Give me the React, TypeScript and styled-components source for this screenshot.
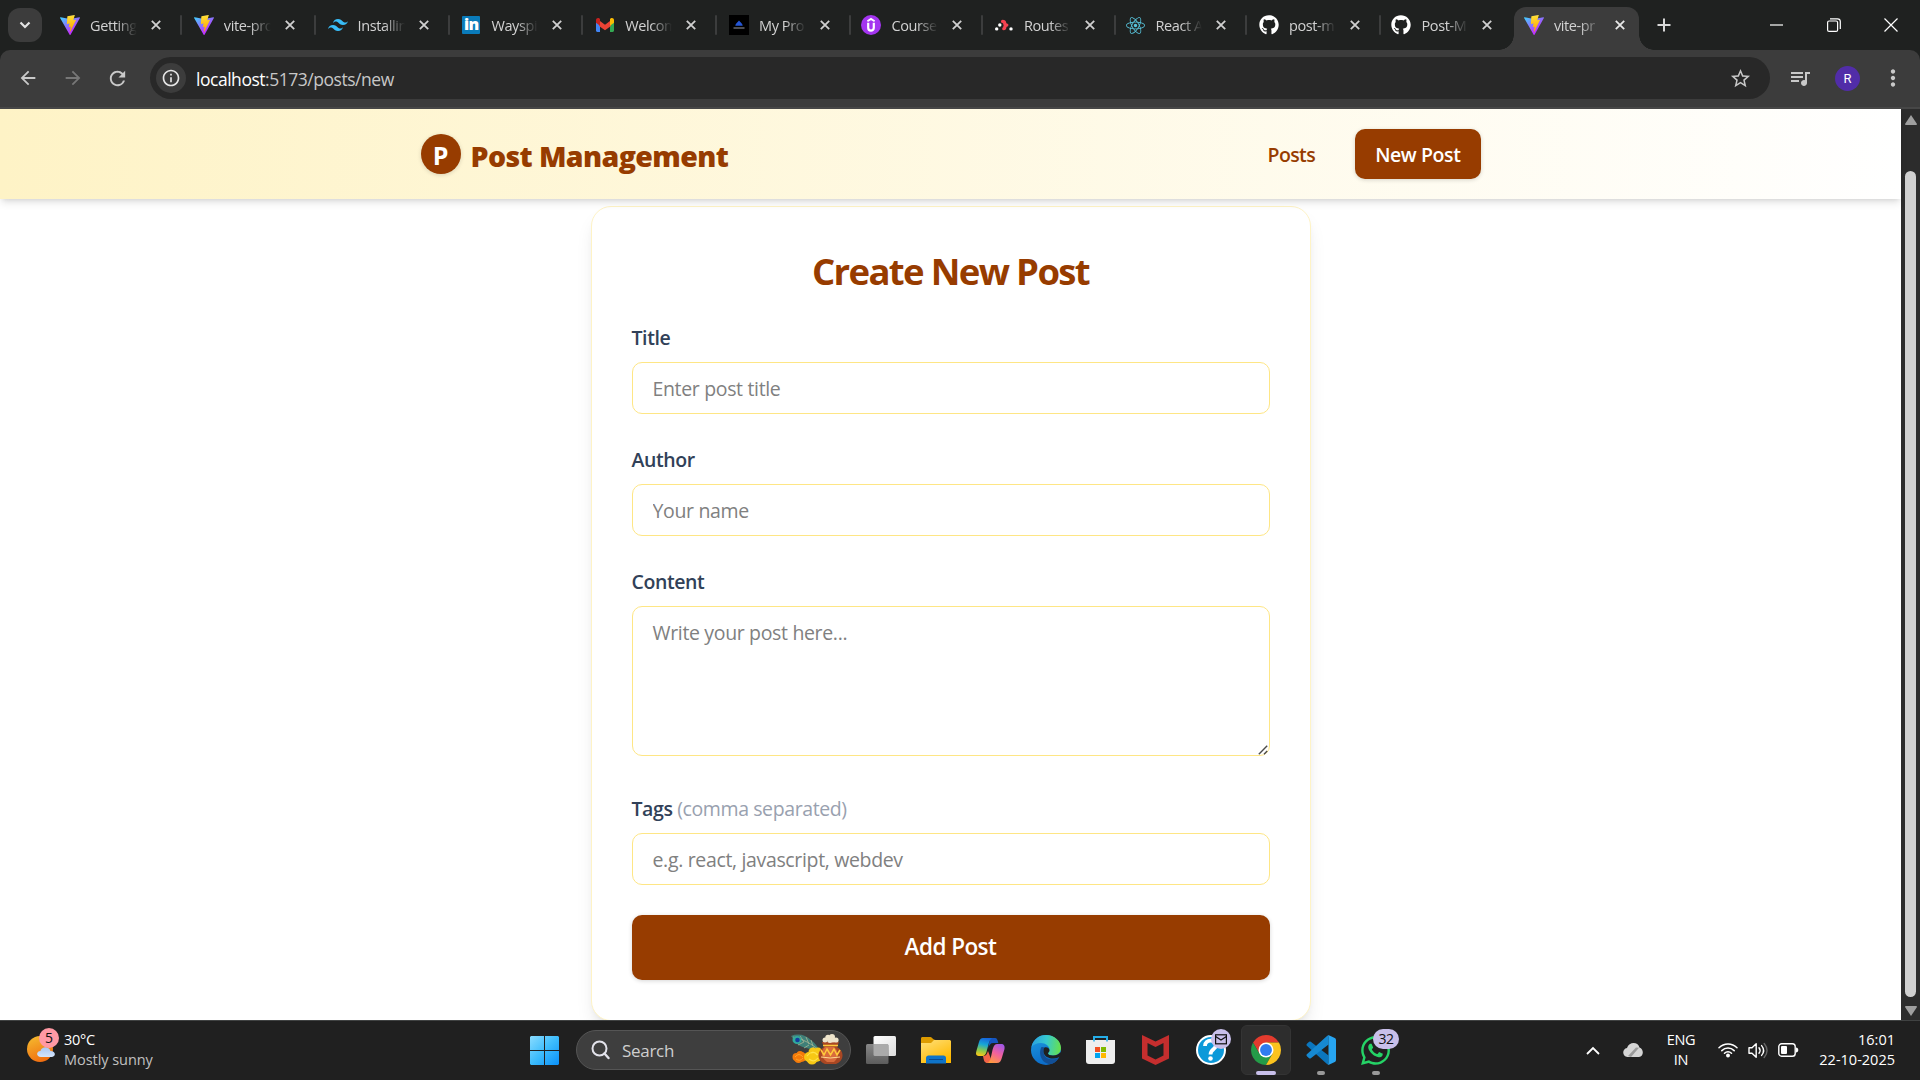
import React from 'react';
import styled, { createGlobalStyle } from 'styled-components';
import { MdArrowBack, MdArrowForward, MdRefresh, MdInfoOutline, MdStarBorder, MdQueueMusic, MdMoreVert } from 'react-icons/md';
import { FaGithub, FaReact, FaWhatsapp } from 'react-icons/fa';
import { SiTailwindcss } from 'react-icons/si';

const brown = '#973c00';

const GlobalStyle = createGlobalStyle`
  *, *::before, *::after { box-sizing: border-box; }
  body {
    margin: 0;
    overflow: hidden;
    background: #fff;
    font-family: "Open Sans", "Noto Sans", sans-serif;
  }
  svg { display: block; flex: none; }
  input, textarea, button { font-family: inherit; }
`;

const Screen = styled.div`
  width: 1920px;
  height: 1080px;
  display: flex;
  flex-direction: column;
  overflow: hidden;
`;

/* ---------- browser tabs ---------- */

const TabStrip = styled.div`
  height: 50px;
  flex: none;
  display: flex;
  background: #1f2120;
  color: #c7c7c7;
`;

const TabSearch = styled.div`
  width: 34px;
  height: 34px;
  margin: 8px 8px 0;
  border-radius: 12px;
  background: #3c3c3c;
  display: flex;
  align-items: center;
  justify-content: center;
`;

const Tab = styled.div<{ $active?: boolean; $w: number }>`
  position: relative;
  flex: none;
  width: ${p => p.$w}px;
  height: 43px;
  margin-top: 7px;
  padding: 0 0 7px 10px;
  display: flex;
  align-items: center;
  border-radius: 12px 12px 0 0;
  background: ${p => (p.$active ? '#3c3c3c' : 'transparent')};
  &::before, &::after {
    content: '';
    display: ${p => (p.$active ? 'block' : 'none')};
    position: absolute;
    bottom: 0;
    width: 15px;
    height: 15px;
  }
  &::before {
    left: -15px;
    background: radial-gradient(circle at 0 0, transparent 14.5px, #3c3c3c 15px);
  }
  &::after {
    right: -15px;
    background: radial-gradient(circle at 100% 0, transparent 14.5px, #3c3c3c 15px);
  }
`;

const TabTitle = styled.span`
  width: 47px;
  margin: 1px 14px 0 10px;
  white-space: nowrap;
  font-size: 14.5px;
  line-height: 22px;
  letter-spacing: -0.4px;
  color: #d2d2d2;
  mask-image: linear-gradient(to right, #000 55%, transparent 100%);
`;

const TabDivider = styled.i`
  width: 2px;
  height: 20px;
  margin-left: 19px;
  border-radius: 1px;
  background: #3c3d3d;
`;

const NewTab = styled.div`
  width: 50px;
  display: flex;
  align-items: center;
  justify-content: center;
`;

const WindowControls = styled.div`
  margin-left: auto;
  padding-right: 1px;
  display: flex;
  align-items: center;
  color: #fff;
`;

const WindowButton = styled.div`
  width: 57px;
  height: 50px;
  display: flex;
  align-items: center;
  justify-content: center;
`;

/* ---------- browser toolbar ---------- */

const ToolbarBack = styled.div`
  height: 59px;
  flex: none;
  background: #1f2120;
`;

const Toolbar = styled.div`
  height: 59px;
  display: flex;
  align-items: center;
  padding: 0 6px 1px 5px;
  background: #3c3c3c;
  border-bottom: 2px solid #474747;
  border-radius: 10px 10px 0 0;
  color: #c7c7c7;
`;

const NavButton = styled.div<{ $dim?: boolean; $w?: number }>`
  width: ${p => p.$w ?? 45}px;
  display: flex;
  justify-content: center;
  color: ${p => (p.$dim ? '#777' : '#c9c9c9')};
`;

const Omnibox = styled.div`
  width: 1620px;
  height: 42px;
  margin-left: 10px;
  padding: 0 18px 0 6px;
  border-radius: 21px;
  background: #282828;
  display: flex;
  align-items: center;
`;

const SiteInfo = styled.div`
  width: 30px;
  height: 30px;
  border-radius: 50%;
  background: #3c3c3c;
  color: #e6e6e6;
  display: flex;
  align-items: center;
  justify-content: center;
`;

const Url = styled.div`
  flex: 1;
  margin: 2px 0 0 10px;
  font-size: 17.5px;
  letter-spacing: -0.47px;
  color: #c7c7c7;
  b { font-weight: 400; color: #fff; }
`;

const Avatar = styled.div`
  width: 25px;
  height: 25px;
  margin: 0 11px 0 6px;
  border-radius: 50%;
  background: #512da8;
  color: #fff;
  font-family: Roboto, sans-serif;
  font-size: 13px;
  display: flex;
  align-items: center;
  justify-content: center;
`;

/* ---------- page ---------- */

const Viewport = styled.div`
  height: 911px;
  flex: none;
  display: flex;
  overflow: hidden;
`;

const Page = styled.div`
  width: 1901px;
  background: #fff;
`;

const Header = styled.header`
  position: relative;
  height: 90px;
  background: linear-gradient(to right, #fef3c6, #fff);
  box-shadow: 0 5px 7.5px -1px rgba(0, 0, 0, 0.1), 0 2.5px 5px -2.5px rgba(0, 0, 0, 0.12);
`;

const HeaderInner = styled.div`
  width: 1060px;
  height: 90px;
  margin: 0 auto;
  display: flex;
  align-items: center;
  justify-content: space-between;
`;

const Brand = styled.div`
  display: flex;
  align-items: center;
  gap: 10px;
  font-size: 28.5px;
  font-weight: 800;
  letter-spacing: -0.6px;
  color: ${brown};
`;

const BrandName = styled.span`
  padding-top: 3px;
`;

const BrandMark = styled.div`
  width: 40px;
  height: 40px;
  border-radius: 50%;
  background: ${brown};
  color: #fff;
  font-size: 25px;
  font-weight: 700;
  letter-spacing: 0;
  display: flex;
  align-items: center;
  justify-content: center;
  padding-top: 2px;
  box-shadow: 0 1px 4px rgba(0, 0, 0, 0.15);
`;

const Nav = styled.nav`
  display: flex;
  align-items: center;
  gap: 40px;
`;

const NavLink = styled.a<{ $primary?: boolean }>`
  height: 50px;
  padding: ${p => (p.$primary ? '1px 20px 0' : '1px 0 0')};
  display: flex;
  align-items: center;
  border-radius: 10px;
  font-size: 19.5px;
  font-weight: 600;
  letter-spacing: ${p => (p.$primary ? -0.4 : -0.6)}px;
  white-space: nowrap;
  color: ${p => (p.$primary ? '#fff' : brown)};
  background: ${p => (p.$primary ? brown : 'transparent')};
  box-shadow: ${p => (p.$primary ? '0 1px 4px rgba(0,0,0,.16)' : 'none')};
`;

const Card = styled.form`
  width: 720px;
  height: 815px;
  margin: 7px auto 0;
  padding: 40px;
  border: 1px solid #fef3c6;
  border-radius: 20px;
  background: #fff;
  box-shadow: 0 12px 19px -4px rgba(0, 0, 0, 0.1), 0 5px 8px -5px rgba(0, 0, 0, 0.1);
  display: flex;
  flex-direction: column;
`;

const Heading = styled.h2`
  height: 45px;
  margin: 0 0 30px;
  padding-top: 2px;
  text-align: center;
  font-size: 36.5px;
  line-height: 45px;
  font-weight: 700;
  letter-spacing: -1.65px;
  color: ${brown};
`;

const Field = styled.label<{ $gap?: number }>`
  position: relative;
  display: flex;
  flex-direction: column;
  margin-bottom: ${p => p.$gap ?? 30}px;
`;

const FieldName = styled.span`
  height: 30px;
  margin-bottom: 10px;
  line-height: 32px;
  font-size: 19.5px;
  font-weight: 600;
  letter-spacing: -0.4px;
  color: #314158;
`;

const Hint = styled.span`
  font-weight: 400;
  color: #99a1af;
`;

const Input = styled.input`
  height: 52px;
  padding: 0 20px;
  border: 1px solid #fee685;
  border-radius: 10px;
  outline: none;
  font-size: 19.5px;
  letter-spacing: -0.34px;
  &::placeholder { color: #808080; opacity: 1; }
`;

const TextArea = styled.textarea`
  height: 150px;
  padding: 11px 20px;
  border: 1px solid #fee685;
  border-radius: 10px;
  outline: none;
  resize: none;
  font-size: 19.5px;
  line-height: 30px;
  letter-spacing: -0.34px;
  &::placeholder { color: #808080; opacity: 1; }
`;

const ResizeGrip = styled.svg`
  position: absolute;
  right: 2px;
  bottom: 1px;
`;

const Submit = styled.button`
  height: 65px;
  padding: 0 0 2px;
  border: 0;
  border-radius: 10px;
  background: ${brown};
  color: #fff;
  font-size: 22.500px;
  font-weight: 600;
  letter-spacing: -0.55px;
  box-shadow: 0 1px 4px rgba(0, 0, 0, 0.16);
`;

const ScrollTrack = styled.div`
  width: 19px;
  padding: 6px 0 4px;
  background: #2c2c2c;
  display: flex;
  flex-direction: column;
  align-items: center;
`;

const ScrollThumb = styled.div`
  width: 11px;
  height: 827px;
  margin: 46px 0 9px;
  border-radius: 6px;
  background: #d0d0d0;
`;

/* ---------- taskbar ---------- */

const Taskbar = styled.div`
  height: 60px;
  flex: none;
  display: flex;
  background: #202020;
  border-top: 1px solid #404242;
  color: #fff;
  font-size: 14.5px;
  line-height: 20px;
`;

const Weather = styled.div`
  width: 517px;
  padding: 3px 0 0 25px;
  display: flex;
  gap: 5px;
`;

const WeatherText = styled.div`
  padding-top: 6px;
  letter-spacing: -0.3px;
  span { display: block; color: #c0c0c0; letter-spacing: -0.05px; }
`;

const AppCell = styled.div`
  position: relative;
  width: 55px;
  height: 58px;
  display: flex;
  align-items: center;
  justify-content: center;
`;

const ActiveCell = styled.div`
  width: 50px;
  height: 50px;
  border-radius: 6px;
  border: 1px solid #343434;
  background: #2d2d2d;
  display: flex;
  align-items: center;
  justify-content: center;
`;

const Running = styled.i<{ $current?: boolean }>`
  position: absolute;
  left: 50%;
  bottom: 4px;
  transform: translateX(-50%);
  width: ${p => (p.$current ? 20 : 8)}px;
  height: 4px;
  border-radius: 2px;
  background: ${p => (p.$current ? '#c8bfea' : '#999')};
`;

const Badge = styled.span<{ $wide?: boolean }>`
  position: absolute;
  top: 8px;
  left: ${p => (p.$wide ? 25 : 28)}px;
  width: ${p => (p.$wide ? 26 : 20)}px;
  height: 20px;
  border-radius: 10px;
  background: #c8bfea;
  color: #111;
  font-size: 14px;
  letter-spacing: -0.5px;
  display: flex;
  align-items: center;
  justify-content: center;
`;

const SearchBox = styled.div`
  width: 275px;
  height: 40px;
  margin: 9px 2px 0 4px;
  padding: 0 6px 0 14px;
  border: 1px solid #555;
  border-radius: 20px;
  background: #3e3e3e;
  color: #cfcfcf;
  font-size: 17px;
  letter-spacing: -0.3px;
  display: flex;
  align-items: center;
  span { flex: 1; margin: 1px 0 0 12px; }
`;

const Tray = styled.div`
  margin-left: auto;
  padding-right: 25px;
  height: 58px;
  display: flex;
  align-items: center;
`;

const TrayText = styled.div<{ $align: string; $w: number; $ls: number }>`
  width: ${p => p.$w}px;
  text-align: ${p => p.$align};
  letter-spacing: ${p => p.$ls}px;
  white-space: nowrap;
`;

const TrayIcon = styled.div<{ $w: number }>`
  width: ${p => p.$w}px;
  display: flex;
  justify-content: center;
`;

/* ---------- drawings ---------- */

const Vite = () => (
  <svg width="20" height="20" viewBox="0 0 256 257">
    <defs>
      <linearGradient id="viteA" x1="0" x2=".58" y1="0.03" y2=".8"><stop stopColor="#41d1ff" /><stop offset="1" stopColor="#bd34fe" /></linearGradient>
      <linearGradient id="viteB" x1=".43" x2=".5" y1="0" y2=".9"><stop stopColor="#ffea83" /><stop offset=".08" stopColor="#ffdd35" /><stop offset="1" stopColor="#ffa800" /></linearGradient>
    </defs>
    <path fill="url(#viteA)" d="M255.153 37.938L134.897 252.976c-2.483 4.44-8.862 4.466-11.382.048L.875 37.958c-2.746-4.814 1.371-10.646 6.827-9.67l120.385 21.517a6.537 6.537 0 0 0 2.322-.004l117.867-21.483c5.438-.991 9.574 4.796 6.877 9.62Z" />
    <path fill="url(#viteB)" d="M185.432.063L96.44 17.501a3.268 3.268 0 0 0-2.634 3.014l-5.474 92.456a3.268 3.268 0 0 0 3.997 3.378l24.777-5.718c2.318-.535 4.413 1.507 3.936 3.838l-7.361 36.047c-.495 2.426 1.782 4.5 4.151 3.78l15.304-4.649c2.372-.72 4.652 1.36 4.15 3.788l-11.698 56.621c-.732 3.542 3.979 5.473 5.943 2.437l1.313-2.028l72.516-144.72c1.215-2.423-.88-5.186-3.54-4.672l-25.505 4.922c-2.396.462-4.435-1.77-3.759-4.114l16.646-57.705c.677-2.35-1.37-4.583-3.769-4.113Z" />
  </svg>
);

const LinkedInTile = styled.div`
  width: 18px;
  height: 18px;
  margin: 0 1px;
  border-radius: 1px;
  background: #0a7bba;
  color: #fff;
  font-size: 16px;
  font-weight: 800;
  line-height: 16px;
  letter-spacing: -0.6px;
  text-align: center;
`;

const Gmail = () => (
  <svg width="20" height="20" viewBox="0 0 20 20">
    <path fill="#4285f4" d="M1 5v10.600c0 .8.5 1.400 1.300 1.400H5V8.500z" />
    <path fill="#34a853" d="M19 5v10.600c0 .8-.5 1.400-1.300 1.400H15V8.500z" />
    <path fill="#ea4335" d="M4 5.200 10 9.800l6-4.600V11l-6 4.300L4 11z" />
    <path fill="#c5221f" d="M1 5c0-2 2-2.600 3.200-1.700L5 4v6.800L1 7.700z" />
    <path fill="#fbbc04" d="M19 5c0-2-2-2.600-3.200-1.700L15 4v6.800l4-3.100z" />
  </svg>
);

const Project = () => (
  <svg width="20" height="20" viewBox="0 0 20 20">
    <path fill="#000" d="M0 0h20v20H0z" />
    <path fill="#2456d6" d="M10 5.500c1.200 2 3.700 3 3.700 5.200H6.300C6.300 8.500 8.800 7.500 10 5.500z" />
    <path stroke="#8a8f98" strokeWidth="1.100" d="M4.500 13h11" />
  </svg>
);

const Udemy = () => (
  <svg width="20" height="20" viewBox="0 0 20 20">
    <circle cx="10" cy="10" r="10" fill="#a435f0" />
    <path fill="none" stroke="#fff" strokeWidth="1.900" d="m6.400 6.200 3.600-2.300 3.600 2.300" />
    <path fill="none" stroke="#fff" strokeWidth="2.200" d="M7.200 7.800v5c0 3.800 5.600 3.800 5.600 0v-5" />
  </svg>
);

const Router = () => (
  <svg width="20" height="20" viewBox="0 0 20 20">
    <path fill="none" stroke="#f44250" strokeWidth="3.300" strokeLinecap="round" strokeLinejoin="round" d="M8.600 6.400c3.600 0 .6 3.700 4.200 3.700-3.200 0-1 3.600-3 3.600" />
    <g fill="#fff"><circle cx="5.800" cy="10" r="1.700" /><circle cx="2.700" cy="13.900" r="1.700" /><circle cx="17" cy="13.900" r="1.700" /></g>
  </svg>
);

const CloseX = ({ bright }: { bright?: boolean }) => (
  <svg width="10" height="10" viewBox="0 0 10 10"><path d="m.8.8 8.400 8.400M9.200.8.8 9.200" stroke={bright ? '#e8e8e8' : '#d0d0d0'} strokeWidth="1.800" /></svg>
);

const WeatherIcon = () => (
  <svg width="34" height="50" viewBox="0 0 34 50">
    <defs>
      <linearGradient id="sun" x1=".2" x2=".6" y1="0" y2="1"><stop stopColor="#f5b92e" /><stop offset="1" stopColor="#f06c10" /></linearGradient>
      <linearGradient id="cloudBlue" x1="0" x2="0" y1="0" y2="1"><stop stopColor="#a9c8f5" /><stop offset="1" stopColor="#d5e5fb" /></linearGradient>
    </defs>
    <circle cx="15" cy="25" r="13" fill="url(#sun)" />
    <path fill="url(#cloudBlue)" d="M16 33c-5 0-5-6-.6-6 1.500-5 8.600-5 10 0 6 .2 5.600 6 1 6z" />
    <circle cx="24" cy="14" r="10" fill="#ff99a4" />
    <text x="24" y="19" textAnchor="middle" fontSize="14" fill="#111">5</text>
  </svg>
);

const WindowsLogo = () => (
  <svg width="29" height="29" viewBox="0 0 29 29">
    <defs><linearGradient id="win" gradientUnits="userSpaceOnUse" x1="0" y1="0" x2="29" y2="29"><stop stopColor="#8adcff" /><stop offset=".5" stopColor="#3dbcfc" /><stop offset="1" stopColor="#0a90f8" /></linearGradient></defs>
    <path fill="url(#win)" d="M1 0h13v14H0V1zM15 0h13l1 1v13H15zM0 15h14v14H1l-1-1zM15 15h14v13l-1 1H15z" />
  </svg>
);

const Doodle = () => (
  <svg width="54" height="34" viewBox="0 0 54 34">
    <path fill="#3f7f78" d="M1 3c7-3 15-1 20 4 4 3 6 6 9 11-9-2-20-3-25-9C3 7 3 5 1 3z" />
    <path fill="none" stroke="#a7b694" strokeWidth=".8" d="M3 4c10 2 19 7 27 14M10 3l4 6M16 4l3 7M21 7l2 6M8 12l6-3M14 15l5-3M20 17l4-3" />
    <ellipse cx="7" cy="7" rx="4.500" ry="4" fill="#30a99e" /><circle cx="7.500" cy="7" r="2.300" fill="#153e9b" />
    <g fill="#f47b0b"><circle cx="6.500" cy="24" r="4" /><circle cx="11.500" cy="24" r="5" /><circle cx="8.500" cy="25.500" r="4.500" /><circle cx="10" cy="21.500" r="3.500" /></g>
    <path fill="none" stroke="#ffa526" strokeWidth="1" d="M5 24q4-5 8 0M6 26q4 3 7-1" />
    <g fill="#f7c815"><circle cx="19" cy="24" r="5" /><circle cx="26" cy="23" r="6" /><circle cx="22" cy="26" r="5.500" /><circle cx="23" cy="19" r="4.500" /><circle cx="28" cy="18" r="3.500" /></g>
    <path fill="none" stroke="#ffe24b" strokeWidth="1.200" d="M17 23q5-7 11-1M19 26q5 4 9-1M21 20q4-2 6 2" />
    <path fill="#a94723" d="M32 9h17l-2 5c8 4 7 14-1 17H35c-8-3-9-13-1-17z" />
    <path fill="#d86b3c" d="M35 14h9c5 4 5 11 0 15h-7c-6-4-7-11-2-15z" />
    <path fill="none" stroke="#ffc93b" strokeWidth="1.500" d="M33 12.500h15M31 17l3 5 3-6 3.500 6 3.500-6 3 6 3-5" />
    <path stroke="#ffd890" strokeWidth="1" d="M31 24q9 2 19 0" fill="none" />
    <g fill="#eee4cb"><circle cx="35" cy="7" r="2.500" /><circle cx="38" cy="4.500" r="2.700" /><circle cx="42" cy="4" r="3" /><circle cx="46" cy="7" r="2.600" /><circle cx="40" cy="7" r="3" /><circle cx="43" cy="7" r="2.500" /></g>
  </svg>
);

const TaskView = () => (
  <svg width="30" height="28" viewBox="0 0 30 28">
    <defs>
      <linearGradient id="tvA" x1="0" x2="1" y1="0" y2="1"><stop stopColor="#fff" /><stop offset="1" stopColor="#dcdcdc" /></linearGradient>
      <linearGradient id="tvB" x1="0" x2="0" y1="0" y2="1"><stop stopColor="#888" /><stop offset="1" stopColor="#5c5c5c" /></linearGradient>
    </defs>
    <rect x="7.500" width="22.500" height="20" rx="1.500" fill="url(#tvA)" />
    <rect y="8" width="22.500" height="20" rx="1.500" fill="url(#tvB)" />
    <path fill="#aaa" d="M7.500 8h14.500v12H9a1.500 1.500 0 0 1-1.500-1.500z" />
  </svg>
);

const Folder = () => (
  <svg width="30" height="27" viewBox="0 0 30 27">
    <defs><linearGradient id="fold" x1="0" x2=".6" y1="0" y2="1"><stop stopColor="#ffe07a" /><stop offset="1" stopColor="#ffb900" /></linearGradient></defs>
    <path fill="#dd9b00" d="M0 1.500C0 .6.600 0 1.500 0h8c1.500 0 2.500 3 5 3v5H0z" />
    <path fill="url(#fold)" d="M0 6h10l3-3h16l1 1v22H0z" />
    <path fill="#0f74c9" d="M5 26.500V21c0-1.500 1-2.500 2.500-2.500h15c1.500 0 2.500 1 2.500 2.500v5.500z" />
    <path stroke="#0a4a91" d="M8 22.500h14" />
  </svg>
);

const Copilot = () => (
  <svg width="30" height="28" viewBox="0 0 30 28">
    <defs>
      <linearGradient id="cpA" x1=".5" x2=".3" y1="0" y2="1"><stop stopColor="#1667dc" /><stop offset=".35" stopColor="#17a6d6" /><stop offset=".7" stopColor="#8bc94a" /><stop offset="1" stopColor="#fcc718" /></linearGradient>
      <linearGradient id="cpB" x1=".8" x2=".3" y1="0" y2="1"><stop stopColor="#a057e8" /><stop offset=".5" stopColor="#f2619d" /><stop offset="1" stopColor="#ff9a3e" /></linearGradient>
    </defs>
    <path fill="#1555c0" d="M14 2h5c2 0 2.700 2 3.300 5h-5c-3 0-4 2-5 5z" />
    <path fill="url(#cpA)" d="M7 2h9c-3 2-3.500 7-5 12-1 4-2 6-5 6H3c-3 0-3.500-2-2.600-5L3 6c.7-2.500 2-4 4-4z" />
    <path fill="#f26448" d="M7 20c3 0 4-2 5-5l3 8c-1 3-2 4-3.500 4-3 0-3.500-2-4.500-7z" />
    <path fill="url(#cpB)" d="M21 8h4c3 0 4 2 3.500 5l-2.700 9c-.8 3-2 5-5 5h-10c4-1 4-6 5.500-12 1-4 2-7 4.700-7z" />
  </svg>
);

const Edge = () => (
  <svg width="30" height="30" viewBox="0 0 30 30">
    <defs>
      <linearGradient id="edA" x1="0" x2="1" y1=".3" y2=".4"><stop stopColor="#2a9fe0" /><stop offset=".5" stopColor="#36c9cf" /><stop offset="1" stopColor="#66e04e" /></linearGradient>
      <linearGradient id="edB" x1="0" x2=".4" y1="0" y2="1"><stop stopColor="#1d9be0" /><stop offset="1" stopColor="#0c6cc9" /></linearGradient>
    </defs>
    <circle cx="15" cy="15" r="15" fill="url(#edB)" />
    <path fill="url(#edA)" d="M.5 12C2 4.500 8 0 15 0c8.500 0 15 6 15 13 0 5-4 7.500-8 7.500-3 0-5-1-5-2 0-.8 1.500-1.500 1.500-4C18.500 11 14.500 8 10 8 5.500 8 2 10 .5 12z" />
    <path fill="#124f96" d="M10.500 12c-4 7 1 18 10 17 3-1 5.600-3 7-6-6 3-14.500 1-15-5.500-.1-2 .5-3.500 1.500-4.500-1-.8-2.500-1.200-3.500-1z" />
    <path fill="#202020" d="M13.500 12.500c3-.8 5 1 5 3 0 1.300-1.500 2-1.500 3 0 1.200 2 2 5 2 3 0 5.500-1 8-3.500v4l-2.600 1.500C22 25 13 23 12.500 17c0-2 .3-3.500 1-4.500z" />
  </svg>
);

const Store = () => (
  <svg width="29" height="30" viewBox="0 0 29 30">
    <path fill="none" stroke="#25aee9" strokeWidth="2" d="M8 6.500V2h13v4.500" />
    <path fill="#eee" d="M0 5h29v21a3 3 0 0 1-3 3H3a3 3 0 0 1-3-3z" />
    <path fill="none" stroke="#25aee9" strokeWidth="1.500" d="M8 6.500V3M21 6.500V3" />
    <path fill="#f25022" d="M9 12h5v5H9z" /><path fill="#7fba00" d="M15 12h5v5h-5z" /><path fill="#00a4ef" d="M9 18h5v5H9z" /><path fill="#ffb900" d="M15 18h5v5h-5z" />
  </svg>
);

const McAfee = () => (
  <svg width="27" height="30" viewBox="0 0 27 30">
    <path fill="#c52e2e" fillRule="evenodd" d="M0 0 13.500 6.500 27 0v23.500L13.500 30 0 23.500zM5.500 8v12.500l8 4 8-4V8l-8 4z" />
  </svg>
);

const Help = () => (
  <svg width="30" height="30" viewBox="0 0 30 30">
    <circle cx="15" cy="15" r="14" fill="#0c99d9" stroke="#fff" strokeWidth="2" />
    <path fill="none" stroke="#fff" strokeWidth="3.800" d="M9 11c0-7 11-7 11-1 0 4.500-5.500 4-5.500 9.500" />
    <circle cx="14.500" cy="23.500" r="2.300" fill="#fff" />
  </svg>
);

const Chrome = () => (
  <svg width="30" height="30" viewBox="0 0 48 48">
    <path fill="#e33b2e" d="M24 12h20.780A24 24 0 0 0 3.220 12l10.390 18z" />
    <path fill="#249b48" d="M13.610 30 3.220 12A24 24 0 0 0 24 48l10.390-18z" />
    <path fill="#fcc31e" d="M34.390 30 24 48A24 24 0 0 0 44.780 12H24z" />
    <circle cx="24" cy="24" r="12" fill="#fff" /><circle cx="24" cy="24" r="9.500" fill="#2f7cf0" />
  </svg>
);

const VsCode = () => (
  <svg width="30" height="30" viewBox="0 0 100 100">
    <path fill="#0b76be" d="M4 28 10.500 22.500q3-2 5.500 0L75 68v29q-4 1-7-2L2 35q-2-4 2-7z" />
    <path fill="#1689d2" d="m4 72 6.500 5.500q3 2 5.500 0L75 32V3q-4-1-7 2L2 65q-2 4 2 7z" />
    <path fill="#27a5f1" d="M71 99q4 1 7-1l18-8q4-2 4-7V17q0-5-4-7L78 2q-4-2-8 1 5-2 5 4v86q0 6-4 6z" />
  </svg>
);

const Wifi = () => (
  <svg width="20" height="16" viewBox="0 0 20 16" fill="none" stroke="#fff" strokeWidth="1.500" strokeLinecap="round">
    <path d="M1 5.800c5-5 13-5 18 0M3.800 8.600c3.500-3.500 8.900-3.500 12.400 0M6.500 11.300c2-2 5-2 7 0" /><circle cx="10" cy="13.500" r="1.200" fill="#fff" />
  </svg>
);

const Sound = () => (
  <svg width="20" height="17" viewBox="0 0 20 17" fill="none" stroke="#fff" strokeWidth="1.400" strokeLinecap="round" strokeLinejoin="round">
    <path d="M1 5.800h3l4.200-4v13.400L4 11.200H1z" /><path d="M11 5.800c1.300 1.600 1.300 3.800 0 5.400M13.600 3.600c2.500 3 2.500 6.800 0 9.800" /><path stroke="#666" d="M16.200 1.500c3.500 4.300 3.500 9.700 0 14" />
  </svg>
);

const Battery = () => (
  <svg width="21" height="14" viewBox="0 0 21 14"><rect x=".8" y=".8" width="16.400" height="12.400" rx="2.800" fill="none" stroke="#fff" strokeWidth="1.400" /><rect x="3" y="3" width="6" height="8" rx="1" fill="#fff" /><path fill="#fff" d="M18 4.500c3 0 3 5 0 5z" /></svg>
);

const CloudSync = () => (
  <svg width="20" height="14" viewBox="0 0 20 14">
    <path fill="#d5d5d5" d="M4.500 14C-1 13.500-1.200 6 4 5c2-6.500 11-6.500 12.500-.5C21 6 21 13.500 16 14z" />
    <path fill="#9a9a9a" d="M5 13 13 4.500l3 .2L8 14z" />
  </svg>
);

const tabs: { title: string; icon: React.ReactNode }[] = [
  { title: 'Getting', icon: <Vite /> },
  { title: 'vite-pro', icon: <Vite /> },
  { title: 'Installin', icon: <SiTailwindcss size={20} color="#38bdf8" /> },
  { title: 'Wayspi', icon: <LinkedInTile>in</LinkedInTile> },
  { title: 'Welcom', icon: <Gmail /> },
  { title: 'My Pro', icon: <Project /> },
  { title: 'Course', icon: <Udemy /> },
  { title: 'Routes', icon: <Router /> },
  { title: 'React A', icon: <FaReact size={19} color="#58c4dc" /> },
  { title: 'post-m', icon: <FaGithub size={20} color="#fff" /> },
  { title: 'Post-M', icon: <FaGithub size={20} color="#fff" /> },
];

export default function App() {
  return (
    <Screen>
      <GlobalStyle />
      <TabStrip>
        <TabSearch><svg width="12" height="8" viewBox="0 0 12 8"><path d="m1.500 1.500 4.500 4.500 4.500-4.500" fill="none" stroke="#e3e3e3" strokeWidth="2.200" /></svg></TabSearch>
        {tabs.map((t, i) => (
          <Tab key={t.title} $w={i < 5 ? 133.8 : 132.5}>
            {t.icon}
            <TabTitle>{t.title}</TabTitle>
            <CloseX />
            {i < tabs.length - 1 && <TabDivider />}
          </Tab>
        ))}
        <Tab $active $w={125}>
          <Vite />
          <TabTitle>vite-pr</TabTitle>
          <CloseX bright />
        </Tab>
        <NewTab><svg width="14" height="14" viewBox="0 0 14 14"><path d="M7 .5v13M.5 7h13" stroke="#d8d8d8" strokeWidth="2" /></svg></NewTab>
        <WindowControls>
          <WindowButton><svg width="13" height="3" viewBox="0 0 13 3"><path d="M0 1h13" stroke="#fff" strokeWidth="1.200" /></svg></WindowButton>
          <WindowButton><svg width="14" height="14" viewBox="0 0 14 14" fill="none" stroke="#fff" strokeWidth="1.200"><rect x=".6" y="3" width="10" height="10.400" rx="1.500" /><path d="M3 .8h7.500c1.500 0 2.800 1 2.800 2.800V11" /></svg></WindowButton>
          <WindowButton><svg width="14" height="14" viewBox="0 0 14 14"><path d="m.5.5 13 13M13.500.5l-13 13" stroke="#fff" strokeWidth="1.200" /></svg></WindowButton>
        </WindowControls>
      </TabStrip>
      <ToolbarBack>
        <Toolbar>
          <NavButton><MdArrowBack size={22} /></NavButton>
          <NavButton $dim><MdArrowForward size={22} /></NavButton>
          <NavButton><MdRefresh size={23} /></NavButton>
          <Omnibox>
            <SiteInfo><MdInfoOutline size={20} /></SiteInfo>
            <Url><b>localhost</b>:5173/posts/new</Url>
            <MdStarBorder size={23} />
          </Omnibox>
          <NavButton $w={59}><MdQueueMusic size={24} /></NavButton>
          <Avatar>R</Avatar>
          <NavButton $w={43}><MdMoreVert size={26} /></NavButton>
        </Toolbar>
      </ToolbarBack>

      <Viewport>
        <Page>
          <Header>
            <HeaderInner>
              <Brand><BrandMark>P</BrandMark><BrandName>Post Management</BrandName></Brand>
              <Nav>
                <NavLink>Posts</NavLink>
                <NavLink $primary>New Post</NavLink>
              </Nav>
            </HeaderInner>
          </Header>
          <Card>
            <Heading>Create New Post</Heading>
            <Field><FieldName>Title</FieldName><Input placeholder="Enter post title" /></Field>
            <Field><FieldName>Author</FieldName><Input placeholder="Your name" /></Field>
            <Field $gap={37}>
              <FieldName>Content</FieldName>
              <TextArea placeholder="Write your post here..." />
              <ResizeGrip width="10" height="10" viewBox="0 0 10 10"><path d="M.8 9.200 9.200.8M6 9.200 9.200 6" stroke="#4a4a4a" strokeWidth="1.400" /></ResizeGrip>
            </Field>
            <Field><FieldName>Tags <Hint>(comma separated)</Hint></FieldName><Input placeholder="e.g. react, javascript, webdev" /></Field>
            <Submit type="button">Add Post</Submit>
          </Card>
        </Page>
        <ScrollTrack>
          <svg width="12" height="10" viewBox="0 0 12 10"><path fill="#9f9f9f" d="M6 0 12 9q0 1-1 1H1q-1 0-1-1z" /></svg>
          <ScrollThumb />
          <svg width="12" height="10" viewBox="0 0 12 10"><path fill="#9f9f9f" d="M6 10 0 1q0-1 1-1h10q1 0 1 1z" /></svg>
        </ScrollTrack>
      </Viewport>

      <Taskbar>
        <Weather>
          <WeatherIcon />
          <WeatherText>30°C<span>Mostly sunny</span></WeatherText>
        </Weather>
        <AppCell><WindowsLogo /></AppCell>
        <SearchBox>
          <svg width="19" height="20" viewBox="0 0 19 20" fill="none" stroke="#e2e2ea" strokeWidth="2"><circle cx="8.500" cy="8.500" r="7" /><path strokeLinecap="round" strokeWidth="2.400" d="m13.500 13.500 4 4.500" /></svg>
          <span>Search</span>
          <Doodle />
        </SearchBox>
        <AppCell><TaskView /></AppCell>
        <AppCell><Folder /></AppCell>
        <AppCell><Copilot /></AppCell>
        <AppCell><Edge /></AppCell>
        <AppCell><Store /></AppCell>
        <AppCell><McAfee /></AppCell>
        <AppCell>
          <Help />
          <Badge><svg width="12" height="11" viewBox="0 0 12 11" fill="none" stroke="#111" strokeWidth="1.200"><rect x=".6" y=".8" width="10.800" height="9" /><path d="m.6 2.500 5.400 3.500 5.400-3.500" /></svg></Badge>
        </AppCell>
        <AppCell><ActiveCell><Chrome /></ActiveCell><Running $current /></AppCell>
        <AppCell><VsCode /><Running /></AppCell>
        <AppCell><FaWhatsapp size={33} color="#25d366" /><Running /><Badge $wide>32</Badge></AppCell>
        <Tray>
          <TrayIcon $w={40}><svg width="14" height="9" viewBox="0 0 14 9"><path d="m1 8 6-6 6 6" fill="none" stroke="#fff" strokeWidth="1.800" /></svg></TrayIcon>
          <TrayIcon $w={40}><CloudSync /></TrayIcon>
          <TrayText $align="center" $w={56} $ls={-0.3}>ENG<br />IN</TrayText>
          <TrayIcon $w={37}><Wifi /></TrayIcon>
          <TrayIcon $w={24}><Sound /></TrayIcon>
          <TrayIcon $w={36}><Battery /></TrayIcon>
          <TrayText $align="right" $w={89} $ls={0}>16:01<br />22-10-2025</TrayText>
        </Tray>
      </Taskbar>
    </Screen>
  );
}
